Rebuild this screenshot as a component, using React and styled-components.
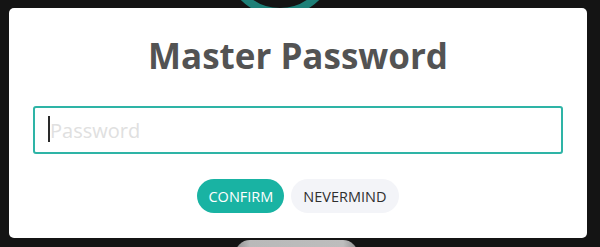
import React from "react";
import styled, { createGlobalStyle } from "styled-components";

const Global = createGlobalStyle`
  html, body { margin: 0; padding: 0; background: #141414; overflow: hidden; }
  * { box-sizing: border-box; }
`;

const Page = styled.div`
  position: relative;
  width: 600px;
  height: 247px;
  padding: 8px 13px 0 9px;
  font-family: "Open Sans", "Noto Sans", sans-serif;
  overflow: hidden;
`;

const Ring = styled.svg`
  position: absolute;
  left: 224px;
  top: -96px;
  width: 112px;
  height: 112px;
`;

const BackPill = styled.div`
  position: absolute;
  left: 235px;
  top: 240px;
  width: 123px;
  height: 30px;
  border-radius: 15px;
  background: linear-gradient(90deg, #8d8d8d 0%, #b9b9b9 12%, #bdbdbd 88%, #8d8d8d 100%);
`;

const Modal = styled.div`
  position: relative;
  width: 578px;
  height: 230px;
  background: #ffffff;
  border-radius: 5px;
  padding: 27px 24px 25px;
  display: flex;
  flex-direction: column;
  align-items: stretch;
`;

const Title = styled.h1`
  margin: 0;
  font-size: 35px;
  line-height: 42px;
  font-weight: 700;
  color: #535353;
  text-align: center;
`;

const Field = styled.div`
  position: relative;
  margin-top: 29px;
  height: 48px;
`;

const Input = styled.input`
  width: 100%;
  height: 100%;
  border: 2px solid #2eb4a6;
  border-radius: 3px;
  padding: 0 15px;
  font-family: "Open Sans", "Noto Sans", sans-serif;
  font-size: 20px;
  color: #333;
  caret-color: transparent;
  outline: none;
  &::placeholder { color: #e0e0e0; }
`;

const Caret = styled.span`
  position: absolute;
  left: 15px;
  top: 10px;
  width: 1.5px;
  height: 26px;
  background: #2a2a2a;
`;

const Actions = styled.div`
  margin-top: 25px;
  display: flex;
  justify-content: center;
  gap: 7px;
`;

const Button = styled.button`
  height: 34px;
  border: none;
  border-radius: 17px;
  padding: 0 ${(p) => (p.$primary ? "11px" : "12px")};
  font-family: "Open Sans", "Noto Sans", sans-serif;
  font-size: 14.5px;
  text-transform: uppercase;
  background: ${(p) => (p.$primary ? "#19b3a3" : "#f3f4f8")};
  color: ${(p) => (p.$primary ? "#ffffff" : "#2f2f2f")};
  cursor: pointer;
`;

export default function App() {
  return (
    <>
      <Global />
      <Page>
        <Ring viewBox="0 0 112 112">
          <circle cx="56" cy="56" r="52" fill="none" stroke="#1e7f77" strokeWidth="8" />
        </Ring>
        <BackPill />
        <Modal>
          <Title>Master Password</Title>
          <Field>
            <Input type="password" placeholder="Password" />
            <Caret />
          </Field>
          <Actions>
            <Button $primary>Confirm</Button>
            <Button>Nevermind</Button>
          </Actions>
        </Modal>
      </Page>
    </>
  );
}
